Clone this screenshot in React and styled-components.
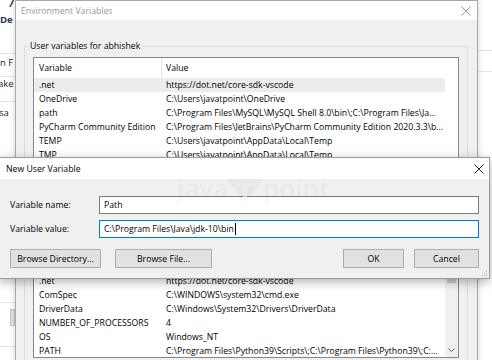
import React from "react";
import styled, { createGlobalStyle } from "styled-components";

const userVars = [
  { name: ".net", value: "https://dot.net/core-sdk-vscode", selected: true },
  { name: "OneDrive", value: "C:\\Users\\javatpoint\\OneDrive" },
  {
    name: "path",
    value: "C:\\Program Files\\MySQL\\MySQL Shell 8.0\\bin\\;C:\\Program Files\\Ja...",
  },
  {
    name: "PyCharm Community Edition",
    value: "C:\\Program Files\\JetBrains\\PyCharm Community Edition 2020.3.3\\b...",
  },
  { name: "TEMP", value: "C:\\Users\\javatpoint\\AppData\\Local\\Temp" },
  { name: "TMP", value: "C:\\Users\\javatpoint\\AppData\\Local\\Temp" },
  { name: "VS140COMNTOOLS", value: "C:\\Program Files (x86)\\Microsoft Visual Studio 14.0\\..." },
];

const systemVars = [
  { name: ".net", value: "https://dot.net/core-sdk-vscode" },
  { name: "ComSpec", value: "C:\\WINDOWS\\system32\\cmd.exe" },
  { name: "DriverData", value: "C:\\Windows\\System32\\Drivers\\DriverData" },
  { name: "NUMBER_OF_PROCESSORS", value: "4" },
  { name: "OS", value: "Windows_NT" },
  {
    name: "PATH",
    value: "C:\\Program Files\\Python39\\Scripts\\;C:\\Program Files\\Python39\\;C:...",
  },
];

const CloseIcon = ({ color }) => (
  <svg width="10" height="10" viewBox="0 0 10 10">
    <path d="M0.5 0.5 L9.5 9.5 M9.5 0.5 L0.5 9.5" stroke={color} strokeWidth="1" fill="none" />
  </svg>
);

const VarList = ({ vars, height, scroll }) => (
  <ListView $height={height}>
    <ListBody>
      <ListHeader>
        <NameCell $head>Variable</NameCell>
        <ValueCell>Value</ValueCell>
      </ListHeader>
      {vars.map((v) => (
        <ListRow key={v.name} $selected={v.selected}>
          <NameCell>{v.name}</NameCell>
          <ValueCell>{v.value}</ValueCell>
        </ListRow>
      ))}
    </ListBody>
    <ScrollBar $visible={scroll}>
      {scroll && (
        <>
          <ScrollArrow>
            <svg width="7" height="4" viewBox="0 0 7 4">
              <path d="M0.5 3.5 L3.5 0.5 L6.5 3.5" stroke="#606060" fill="none" />
            </svg>
          </ScrollArrow>
          <ScrollThumb />
          <ScrollTrack />
          <ScrollArrow>
            <svg width="7" height="4" viewBox="0 0 7 4">
              <path d="M0.5 0.5 L3.5 3.5 L6.5 0.5" stroke="#606060" fill="none" />
            </svg>
          </ScrollArrow>
        </>
      )}
    </ScrollBar>
  </ListView>
);

const App = () => {
  return (
    <>
      <GlobalStyle />
      <Desktop>
        <BackWindow>
          <LeftStrip>
            <StripIcon>
              <svg width="5" height="8" viewBox="0 0 5 8">
                <path d="M4.5 0 L1 7" stroke="#2b4a7a" strokeWidth="1.6" />
              </svg>
            </StripIcon>
            <StripText $height={16} $bold>
              De
            </StripText>
            <StripRule $gap={25} />
            <StripText $gap={2}>n F</StripText>
            <StripRule $gap={6} />
            <StripText $indent={-2}>ake</StripText>
            <StripRule $gap={10} />
            <StripText $gap={4} $indent={-1}>
              sa
            </StripText>
            <StripRule $gap={182} />
            <StripBox />
            <StripRule $gap={20} />
          </LeftStrip>
          <RightStrip>
            <StripRule $gap={50} />
            <StripRule $gap={20} />
          </RightStrip>
        </BackWindow>

        <EnvWindow>
          <EnvTitleBar>
            <span>Environment Variables</span>
            <CloseIcon color="#9a9a9a" />
          </EnvTitleBar>
          <EnvBody>
            <GroupBox>
              <Legend>User variables for abhishek</Legend>
              <VarList vars={userVars} height={130} />
              <ActionRow>
                <PushButton $width={62}>New...</PushButton>
                <PushButton $width={62}>Edit...</PushButton>
                <PushButton $width={62}>Delete</PushButton>
              </ActionRow>
            </GroupBox>
            <GroupBox>
              <Legend>System variables</Legend>
              <VarList vars={systemVars} height={105} scroll />
            </GroupBox>
          </EnvBody>
        </EnvWindow>

        <Dialog>
          <Watermark>
            <span>java</span>
            <svg width="40" height="26" viewBox="0 0 40 26">
              <path d="M1 2 H39 L20 25 Z" fill="currentColor" />
              <path d="M10 6 H30 V9 H22 V20 H18 V9 H10 Z" fill="#f0f0f0" opacity="0.6" />
            </svg>
            <span>point</span>
          </Watermark>
          <DialogTitleBar>
            <span>New User Variable</span>
            <CloseIcon color="#222" />
          </DialogTitleBar>
          <DialogBody>
            <FieldRow>
              <FieldLabel>Variable name:</FieldLabel>
              <TextBox>Path</TextBox>
            </FieldRow>
            <FieldRow>
              <FieldLabel>Variable value:</FieldLabel>
              <TextBox $focused>
                C:\Program Files\Java\jdk-10\bin
                <Caret />
              </TextBox>
            </FieldRow>
            <ButtonRow>
              <PushButton $width={91}>Browse Directory...</PushButton>
              <PushButton $width={97}>Browse File...</PushButton>
              <Spacer />
              <PushButton $width={61}>OK</PushButton>
              <PushButton $width={65}>Cancel</PushButton>
            </ButtonRow>
          </DialogBody>
          <Grip>
            <svg width="6" height="6" viewBox="0 0 6 6" fill="#b0b0b0">
              <rect x="4" y="0" width="1" height="1" />
              <rect x="2" y="2" width="1" height="1" />
              <rect x="4" y="2" width="1" height="1" />
              <rect x="0" y="4" width="1" height="1" />
              <rect x="2" y="4" width="1" height="1" />
              <rect x="4" y="4" width="1" height="1" />
            </svg>
          </Grip>
        </Dialog>
      </Desktop>
    </>
  );
};
export default App;

const GlobalStyle = createGlobalStyle`
  html, body {
    margin: 0;
    padding: 0;
    background: #ffffff;
    overflow: hidden;
  }
  * {
    box-sizing: border-box;
  }
`;

const Desktop = styled.div`
  position: relative;
  width: 492px;
  height: 360px;
  overflow: hidden;
  background: #ffffff;
  font-family: "Open Sans", "Noto Sans", sans-serif;
  font-size: 8.7px;
  color: #000000;
`;

const BackWindow = styled.div`
  position: absolute;
  inset: 0;
  display: flex;
  justify-content: space-between;
  background: #ffffff;
`;

const LeftStrip = styled.div`
  width: 15px;
  display: flex;
  flex-direction: column;
  overflow: hidden;
  white-space: nowrap;
  font-size: 9.5px;
  color: #222;
`;

const RightStrip = styled.div`
  width: 15px;
  display: flex;
  flex-direction: column;
`;

const StripIcon = styled.div`
  height: 12px;
  padding-left: 9px;
  line-height: 0;
`;

const StripText = styled.div`
  height: ${(p) => p.$height || 14}px;
  margin-top: ${(p) => p.$gap || 0}px;
  margin-left: ${(p) => p.$indent || 0}px;
  line-height: ${(p) => p.$height || 14}px;
  font-weight: ${(p) => (p.$bold ? 700 : 400)};
  color: ${(p) => (p.$bold ? "#1f3558" : "#222")};
`;

const StripRule = styled.div`
  height: 1px;
  margin-top: ${(p) => p.$gap || 0}px;
  background: #e3e3e3;
  flex-shrink: 0;
`;

const StripBox = styled.div`
  height: 17px;
  margin: 6px 0 0 10px;
  background: #e1e1e1;
  border: 1px solid #c8c8c8;
  flex-shrink: 0;
`;

const EnvWindow = styled.div`
  position: absolute;
  left: 15px;
  top: 0;
  width: 463px;
  height: 390px;
  background: #f0f0f0;
  border: 1px solid #a9a9a9;
  box-shadow: 0 0 6px rgba(0, 0, 0, 0.18);
  display: flex;
  flex-direction: column;
`;

const EnvTitleBar = styled.div`
  height: 19px;
  flex-shrink: 0;
  background: #ffffff;
  display: flex;
  align-items: center;
  justify-content: space-between;
  padding: 0 6px 0 5px;
  color: #9a9a9a;
`;

const EnvBody = styled.div`
  display: flex;
  flex-direction: column;
  gap: 14px;
  padding: 20px 9px 0 8px;
`;

const GroupBox = styled.fieldset`
  margin: 0;
  min-width: 0;
  padding: 4px 8px 8px;
  border: 1px solid #dcdcdc;
`;

const Legend = styled.legend`
  padding: 0 2px;
  margin-left: -5px;
  line-height: 13px;
`;

const ListView = styled.div`
  height: ${(p) => p.$height}px;
  display: flex;
  background: #ffffff;
  border: 1px solid #828790;
  overflow: hidden;
`;

const ListBody = styled.div`
  flex: 1;
  min-width: 0;
  overflow: hidden;
`;

const ListHeader = styled.div`
  height: 20px;
  display: flex;
  align-items: center;
`;

const ListRow = styled.div`
  height: 14px;
  display: flex;
  align-items: center;
  white-space: nowrap;
  background: ${(p) => (p.$selected ? "#ececec" : "transparent")};
`;

const NameCell = styled.div`
  width: 128px;
  flex-shrink: 0;
  align-self: stretch;
  display: flex;
  align-items: center;
  padding-left: 5px;
  overflow: hidden;
  border-right: 1px solid ${(p) => (p.$head ? "#e5e5e5" : "transparent")};
`;

const ValueCell = styled.div`
  flex: 1;
  min-width: 0;
  overflow: hidden;
  padding-left: 4px;
`;

const ScrollBar = styled.div`
  width: 13px;
  flex-shrink: 0;
  display: flex;
  flex-direction: column;
  background: ${(p) => (p.$visible ? "#f0f0f0" : "#ffffff")};
`;

const ScrollArrow = styled.div`
  height: 14px;
  display: flex;
  align-items: center;
  justify-content: center;
`;

const ScrollThumb = styled.div`
  height: 15px;
  margin: 0 2px;
  background: #cdcdcd;
`;

const ScrollTrack = styled.div`
  flex: 1;
`;

const ActionRow = styled.div`
  display: flex;
  justify-content: flex-end;
  gap: 8px;
  margin-top: 7px;
`;

const PushButton = styled.div`
  width: ${(p) => p.$width}px;
  height: 19px;
  flex-shrink: 0;
  display: flex;
  align-items: center;
  justify-content: center;
  background: #e1e1e1;
  border: 1px solid #adadad;
  white-space: nowrap;
`;

const Dialog = styled.div`
  position: absolute;
  left: -1px;
  top: 157px;
  width: 491px;
  height: 122px;
  background: #f0f0f0;
  border: 1px solid #9a9a9a;
  box-shadow: 0 3px 10px rgba(0, 0, 0, 0.3);
  display: flex;
  flex-direction: column;
`;

const DialogTitleBar = styled.div`
  height: 21px;
  flex-shrink: 0;
  background: #ffffff;
  display: flex;
  align-items: center;
  justify-content: space-between;
  padding: 0 5px 0 6px;
`;

const DialogBody = styled.div`
  display: flex;
  flex-direction: column;
  gap: 6px;
  padding: 17px 10px 0 10px;
`;

const FieldRow = styled.div`
  display: flex;
  align-items: center;
`;

const FieldLabel = styled.div`
  width: 89px;
  flex-shrink: 0;
`;

const TextBox = styled.div`
  flex: 1;
  height: 18px;
  display: flex;
  align-items: center;
  padding-left: 4px;
  background: #ffffff;
  border: 1px solid ${(p) => (p.$focused ? "#0078d7" : "#7a7a7a")};
  white-space: nowrap;
`;

const Caret = styled.span`
  width: 1px;
  height: 12px;
  margin-left: 1px;
  background: #000;
`;

const ButtonRow = styled.div`
  display: flex;
  gap: 10px;
  margin-top: 5px;

  & > :nth-child(2) {
    margin-left: 4px;
  }
`;

const Spacer = styled.div`
  flex: 1;
`;

const Watermark = styled.div`
  position: absolute;
  left: 177px;
  top: 12px;
  display: flex;
  align-items: center;
  font-size: 26px;
  font-weight: 600;
  color: rgba(0, 0, 0, 0.035);
  pointer-events: none;
  z-index: 1;

  svg {
    margin: 4px -2px 0 -3px;
  }
`;

const Grip = styled.div`
  position: absolute;
  right: 1px;
  bottom: 1px;
  line-height: 0;
`;
